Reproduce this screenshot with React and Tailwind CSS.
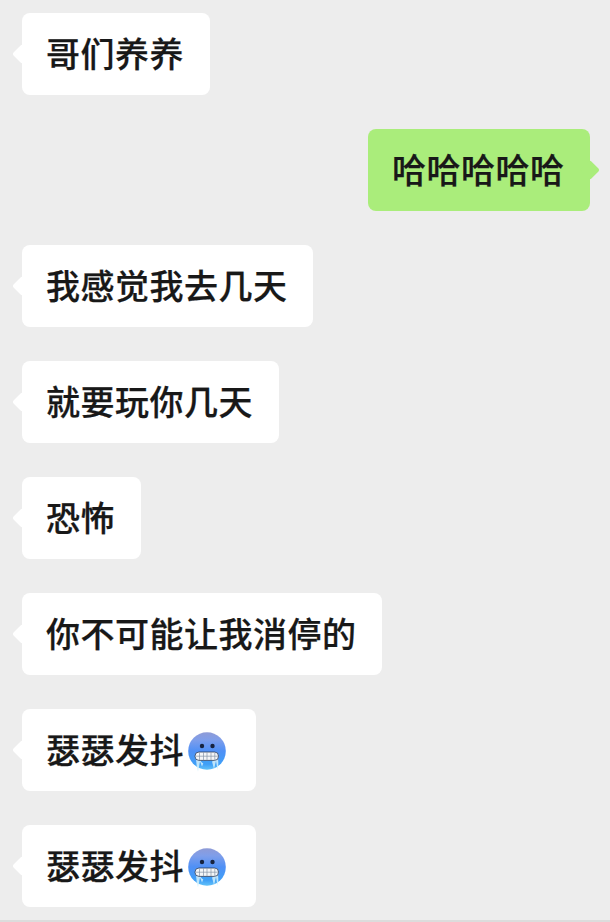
const messages = [
  { id: 1, text: '哥们养养' },
  { id: 2, text: '哈哈哈哈哈', mine: true },
  { id: 3, text: '我感觉我去几天' },
  { id: 4, text: '就要玩你几天' },
  { id: 5, text: '恐怖' },
  { id: 6, text: '你不可能让我消停的' },
  { id: 7, text: '瑟瑟发抖', emoji: true },
  { id: 8, text: '瑟瑟发抖', emoji: true },
]

function ColdFace({ id }) {
  return (
    <svg viewBox="0 0 38 42" className="ml-[4px] mr-[4.5px] mt-[2px] h-[42px] w-[38px] shrink-0">
      <defs>
        <linearGradient id={`face-${id}`} x1="0" y1="0" x2="0" y2="1">
          <stop offset="0" stopColor="#8f9bd6" />
          <stop offset="0.2" stopColor="#7f9eea" />
          <stop offset="0.5" stopColor="#4f90f6" />
          <stop offset="0.85" stopColor="#3f9ff7" />
          <stop offset="1" stopColor="#62c2f8" />
        </linearGradient>
      </defs>
      <circle cx="19" cy="21" r="18.8" fill={`url(#face-${id})`} />
      <circle cx="14" cy="16" r="2.2" fill="#17233f" />
      <circle cx="24.5" cy="16" r="2.2" fill="#17233f" />
      <path
        d="M8 29C8.5 33 8.5 37 10 41.5C11 37.5 11.5 34 12 31.5L14 36.5L16 31.5H24L26 39L28 31L29.5 40C30.5 36 30.5 32 30 29Z"
        fill="#d4f1fc"
        opacity="0.85"
      />
      <path d="M13 31.5C16 35 21 35 24.5 31.5L24 30H13Z" fill="#3f9ff7" />
      <rect x="7" y="22" width="23.5" height="8.4" rx="4" fill="#f4f6f8" stroke="#2c3c5c" strokeWidth="0.8" />
      <path d="M7.5 26.2H30M11.5 22.4V30M15.5 22.2V30.2M19 22.2V30.2M23 22.2V30.2M26.8 22.4V30" stroke="#8795a8" strokeWidth="0.7" fill="none" />
    </svg>
  )
}

function Bubble({ message }) {
  const { id, text, mine, emoji } = message

  return (
    <div
      className={`relative flex h-[82px] items-center rounded-[8px] pl-[24px] pr-[25.5px] text-[34px] font-medium leading-none tracking-[0.5px] text-[#181818] [-webkit-text-stroke:0.25px_#181818] ${
        mine ? 'mr-[20px] self-end bg-[#aaed7b]' : 'self-start bg-white'
      }`}
    >
      <span
        className={`absolute top-1/2 h-[14px] w-[14px] -translate-y-1/2 rotate-45 rounded-[2px] ${
          mine ? 'right-[-7px] bg-[#aaed7b]' : 'left-[-7px] bg-white'
        }`}
      />
      <span className="relative mb-[3px] whitespace-nowrap">{text}</span>
      {emoji && <ColdFace id={id} />}
    </div>
  )
}

export default function App() {
  return (
    <div
      className="flex h-[922px] w-[610px] flex-col gap-[34px] overflow-hidden border-b-2 border-[#dcdcdc] bg-[#ededed] pl-[22px] pt-[13px]"
      style={{ fontFamily: '"Noto Sans CJK SC", "Noto Sans", sans-serif' }}
    >
      {messages.map((message) => (
        <Bubble key={message.id} message={message} />
      ))}
    </div>
  )
}
